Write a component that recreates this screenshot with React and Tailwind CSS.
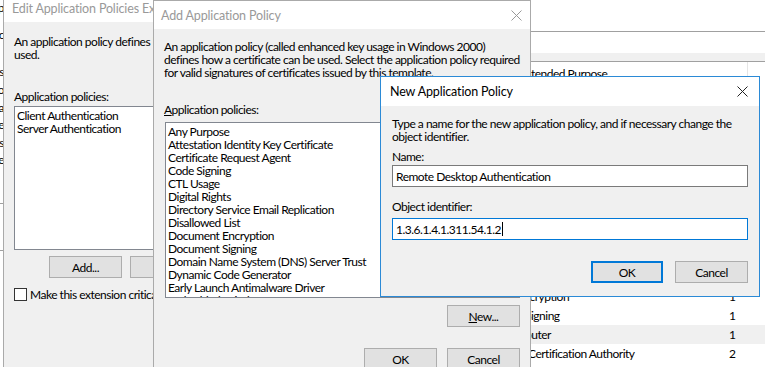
import React from 'react'

const policies = [
  'Any Purpose',
  'Attestation Identity Key Certificate',
  'Certificate Request Agent',
  'Code Signing',
  'CTL Usage',
  'Digital Rights',
  'Directory Service Email Replication',
  'Disallowed List',
  'Document Encryption',
  'Document Signing',
  'Domain Name System (DNS) Server Trust',
  'Dynamic Code Generator',
  'Early Launch Antimalware Driver',
  'Embedded Windows System Component Verification',
  'Encrypting File System',
]

function CloseIcon({ className }) {
  return (
    <svg className={className} width="11" height="11" viewBox="0 0 11 11" fill="none" stroke="currentColor" strokeWidth="1">
      <path d="M0.5 0.5l10 10M10.5 0.5l-10 10" />
    </svg>
  )
}

function Button({ children, className = '', primary }) {
  return (
    <div
      className={`h-[22px] flex items-center justify-center bg-[#e1e1e1] ${
        primary ? 'border-2 border-[#0078d7]' : 'border border-[#adadad]'
      } ${className}`}
    >
      {children}
    </div>
  )
}

function BackWindowLeft() {
  // scraps of the window behind, only a few pixels show
  const lines = [
    ['Temp', 8],
    ['Spec', 35],
    ['Ops', 72],
    ['Info', 90],
    ['Data', 108],
    ['Table', 125],
    ['Keys', 143],
    ['Type', 160],
  ]
  return (
    <div className="absolute left-[-200px] top-0 w-[203px] h-[367px] bg-white overflow-hidden">
      {lines.map(([t, y]) => (
        <div key={y} className="absolute right-[-1px] text-right" style={{ top: y - 7 }}>
          {t}
        </div>
      ))}
      <div className="absolute left-0 right-0 top-[203px] border-t border-[#a0a0a0]" />
      <div className="absolute left-0 right-0 top-[250px] border-t border-[#a0a0a0]" />
    </div>
  )
}

function BackWindowRight() {
  const rows = [
    { name: 'Encryption', pad: 'pl-[117px]', n: '1' },
    { name: 'Signing', pad: 'pl-[125px]', n: '1' },
    { name: 'Computer', pad: 'pl-[102px]', n: '1', hover: true },
    { name: 'Certification Authority', pad: 'pl-[128px]', n: '2' },
  ]
  return (
    <div className="absolute left-[400px] top-0 w-[365px] h-[367px] bg-white flex flex-col">
      <div className="h-[32px] border-b border-[#a0a0a0]" />
      <div className="h-[21px]" />
      <div className="h-[9px] bg-[#f0f0f0] border-b border-[#a0a0a0]" />
      <div className="h-[23px] flex items-center">
        <div className="w-[348px] h-full flex items-center pl-[122px] border-r border-[#e5e5e5]">Intended Purpose</div>
      </div>
      <div className="h-[202px]" />
      {rows.map((r) => (
        <div key={r.name} className={`h-[19px] flex items-center ${r.hover ? 'bg-[#f0f0f0]' : ''}`}>
          <div className={`w-[329px] ${r.pad}`}>{r.name}</div>
          <div>{r.n}</div>
        </div>
      ))}
    </div>
  )
}

function EditDialog() {
  return (
    <div className="absolute left-[3px] top-[-7px] w-[420px] h-[390px] bg-[#f0f0f0] border border-[#aaaaaa] flex flex-col">
      <div className="h-[28px] bg-white flex items-center pl-[8px] text-[#999999] text-[12.5px] tracking-[-0.15px]">
        Edit Application Policies Extension
      </div>
      <div className="pl-[10px] pt-[13px] flex flex-col">
        <p>
          An application policy defines how a certificate can be
          <br />
          used.
        </p>
        <p className="mt-[29px]">Application policies:</p>
        <div className="mt-[3px] w-[300px] h-[144px] bg-white border border-[#828790] pt-[2px] pl-[2px]">
          <div>Client Authentication</div>
          <div>Server Authentication</div>
        </div>
        <div className="mt-[6px] ml-[35px] flex gap-[8px]">
          <Button className="w-[73px]">Add...</Button>
          <Button className="w-[73px]">Edit...</Button>
          <Button className="w-[73px]">Remove</Button>
        </div>
        <div className="mt-[10px] flex items-center">
          <div className="w-[13px] h-[13px] bg-white border border-[#333333]" />
          <span className="ml-[3px]">Make this extension critical</span>
        </div>
      </div>
    </div>
  )
}

function AddDialog() {
  return (
    <div className="absolute left-[153px] top-0 w-[378px] h-[390px] bg-[#f0f0f0] border border-[#aaaaaa] flex flex-col">
      <div className="h-[28px] bg-white flex items-center justify-between pl-[7px] pr-[8px] text-[#999999]">
        <span className="text-[12.5px] tracking-[-0.15px]">Add Application Policy</span>
        <CloseIcon className="text-[#999999]" />
      </div>
      <div className="pl-[10px] pr-[10px] pt-[11px] flex flex-col">
        <p>
          An application policy (called enhanced key usage in Windows 2000)
          <br />
          defines how a certificate can be used. Select the application policy required
          <br />
          for valid signatures of certificates issued by this template.
        </p>
        <p className="mt-[24px]">
          <span className="underline">A</span>pplication policies:
        </p>
        <div className="mt-[6px] ml-[1px] h-[176px] bg-white border border-[#828790] pt-[2px] pl-[2px] overflow-hidden">
          {policies.map((p) => (
            <div key={p}>{p}</div>
          ))}
        </div>
        <div className="mt-[7px] flex justify-end">
          <Button className="w-[73px]">
            <span>
              <span className="underline">N</span>ew...
            </span>
          </Button>
        </div>
        <div className="mt-[21px] flex justify-end gap-[10px]">
          <Button className="w-[73px]">OK</Button>
          <Button className="w-[73px]">Cancel</Button>
        </div>
      </div>
    </div>
  )
}

function NewDialog() {
  return (
    <div className="absolute left-[380px] top-[76px] w-[380px] h-[221px] bg-[#f0f0f0] border border-[#2b8ad6] flex flex-col">
      <div className="h-[29px] bg-white flex items-center justify-between pl-[9px] pr-[11px] text-black">
        <span className="text-[12.5px] tracking-[-0.15px]">New Application Policy</span>
        <CloseIcon className="text-[#222222]" />
      </div>
      <div className="pl-[11px] pr-[11px] pt-[11px] flex flex-col">
        <p>
          Type a name for the new application policy, and if necessary change the
          <br />
          object identifier.
        </p>
        <p className="mt-[7px]">Name:</p>
        <div className="mt-[2px] h-[22px] bg-white border border-[#7a7a7a] flex items-center pl-[3px]">
          Remote Desktop Authentication
        </div>
        <p className="mt-[13px]">Object identifier:</p>
        <div className="mt-[5px] h-[22px] bg-white border border-[#0078d7] flex items-center pl-[3px]">
          1.3.6.1.4.1.311.54.1.2
          <span className="inline-block w-px h-[14px] bg-black ml-px" />
        </div>
        <div className="mt-[21px] flex justify-end gap-[12px]">
          <Button primary className="w-[72px]">OK</Button>
          <Button className="w-[73px]">Cancel</Button>
        </div>
      </div>
    </div>
  )
}

export default function App() {
  return (
    <div className="relative w-[765px] h-[367px] overflow-hidden bg-white text-black whitespace-nowrap font-['Segoe_UI','Lato',sans-serif] text-[12px] leading-[13px] tracking-[-0.5px]">
      <BackWindowLeft />
      <BackWindowRight />
      <EditDialog />
      <AddDialog />
      <NewDialog />
    </div>
  )
}
